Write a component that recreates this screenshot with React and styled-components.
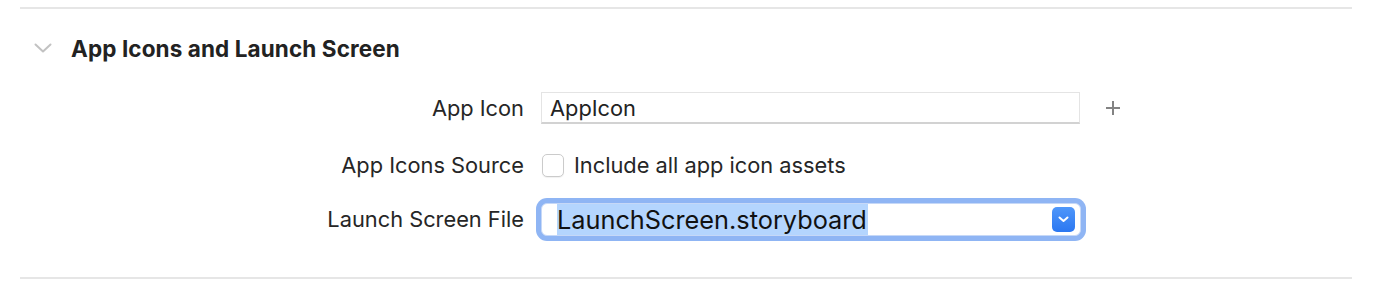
import React from "react";
import styled, { createGlobalStyle } from "styled-components";

const Global = createGlobalStyle`
  html, body { margin: 0; padding: 0; background: #ffffff; }
  body { font-family: Inter, "Noto Sans", "Liberation Sans", sans-serif; color: #262626; }
`;

const Page = styled.div`
  width: 1376px;
  height: 292px;
  box-sizing: border-box;
  padding: 7px 24px 0 20px;
  background: #fff;
`;

const Divider = styled.div`
  height: 2px;
  background: #e6e6e6;
`;

const Header = styled.div`
  display: flex;
  align-items: center;
  height: 78px;
  padding-left: 14px;
  gap: 19px;
`;

const Chevron = styled.svg`
  width: 18px;
  height: 10px;
  flex: none;
`;

const Title = styled.h2`
  margin: 0;
  font-size: 22.5px;
  font-weight: 700;
  color: #222;
  letter-spacing: 0.1px;
`;

const Form = styled.div`
  display: grid;
  grid-template-columns: 504px 1fr;
  grid-template-rows: 58px 56px 52px;
  column-gap: 17px;
  align-items: center;
  padding-bottom: 32px;
  margin-top: -8px;
`;

const Label = styled.div`
  text-align: right;
  font-size: 21.8px;
  color: #262626;
`;

const Control = styled.div`
  display: flex;
  align-items: center;
`;

const TextField = styled.div`
  box-sizing: border-box;
  width: 539px;
  height: 32px;
  border: 1px solid #e4e4e4;
  border-bottom: 2px solid #d2d2d2;
  display: flex;
  align-items: center;
  padding-left: 8px;
  font-size: 21.8px;
  color: #222;
`;

const PlusButton = styled.div`
  margin-left: 26px;
  width: 14px;
  height: 14px;
  position: relative;
  &::before, &::after {
    content: "";
    position: absolute;
    background: #838383;
  }
  &::before { left: 6px; top: 0; width: 2px; height: 14px; }
  &::after { top: 6px; left: 0; width: 14px; height: 2px; }
`;

const Checkbox = styled.div`
  box-sizing: border-box;
  width: 22px;
  height: 23px;
  border: 1px solid #cbcbcb;
  border-radius: 5px;
  background: #fff;
  box-shadow: 0 1px 1px rgba(0, 0, 0, 0.06);
  margin-right: 10px;
  margin-left: 1px;
`;

const CheckLabel = styled.span`
  font-size: 21.8px;
  color: #262626;
`;

const Popup = styled.div`
  box-sizing: border-box;
  width: 540px;
  height: 33px;
  border: 1px solid #c6d8f7;
  border-radius: 6px;
  box-shadow: 0 0 0 5px #8fb5f4;
  background: #fff;
  display: flex;
  align-items: center;
  padding-left: 15px;
  padding-right: 4px;
`;

const Selected = styled.span`
  font-size: 25.3px;
  color: #111;
  background: #b4d5fe;
  line-height: 31px;
  padding-right: 1px;
`;

const Spacer = styled.div`
  flex: 1;
`;

const Stepper = styled.div`
  width: 23px;
  height: 25px;
  border-radius: 5px;
  background: linear-gradient(#4f97fa, #2b77f1);
  display: flex;
  align-items: center;
  justify-content: center;
  margin-right: 1px;
`;

export default function App() {
  return (
    <>
      <Global />
      <Page>
        <Divider />
        <Header>
          <Chevron viewBox="0 0 18 10">
            <path d="M1.5 1.5 L9 8.5 L16.5 1.5" fill="none" stroke="#c2c2c2" strokeWidth="2" strokeLinecap="round" strokeLinejoin="round" />
          </Chevron>
          <Title>App Icons and Launch Screen</Title>
        </Header>
        <Form>
          <Label>App Icon</Label>
          <Control>
            <TextField>AppIcon</TextField>
            <PlusButton />
          </Control>
          <Label>App Icons Source</Label>
          <Control>
            <Checkbox />
            <CheckLabel>Include all app icon assets</CheckLabel>
          </Control>
          <Label>Launch Screen File</Label>
          <Control>
            <Popup>
              <Selected>LaunchScreen.storyboard</Selected>
              <Spacer />
              <Stepper>
                <svg width="11" height="7" viewBox="0 0 11 7">
                  <path d="M1.5 1.5 L5.5 5 L9.5 1.5" fill="none" stroke="#fff" strokeWidth="2" strokeLinecap="round" strokeLinejoin="round" />
                </svg>
              </Stepper>
            </Popup>
          </Control>
        </Form>
        <Divider />
      </Page>
    </>
  );
}
